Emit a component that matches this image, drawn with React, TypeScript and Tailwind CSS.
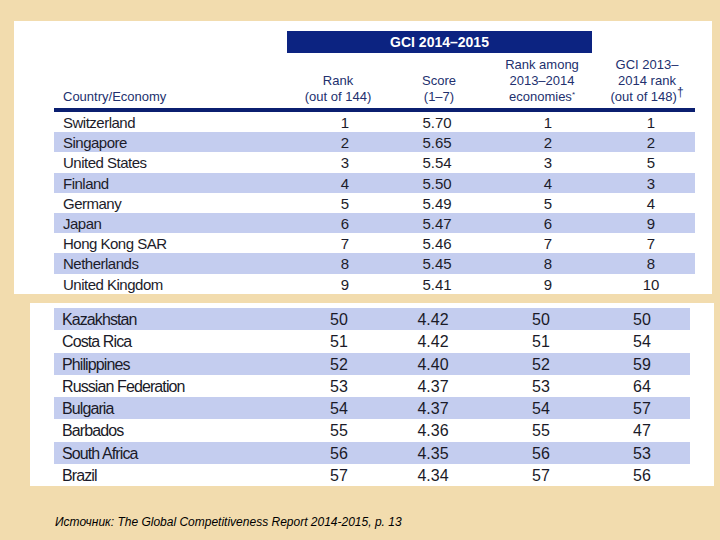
const top: [string, string, string, string, string][] = [
  ["Switzerland", "1", "5.70", "1", "1"],
  ["Singapore", "2", "5.65", "2", "2"],
  ["United States", "3", "5.54", "3", "5"],
  ["Finland", "4", "5.50", "4", "3"],
  ["Germany", "5", "5.49", "5", "4"],
  ["Japan", "6", "5.47", "6", "9"],
  ["Hong Kong SAR", "7", "5.46", "7", "7"],
  ["Netherlands", "8", "5.45", "8", "8"],
  ["United Kingdom", "9", "5.41", "9", "10"],
];

const bottom: [string, string, string, string, string][] = [
  ["Kazakhstan", "50", "4.42", "50", "50"],
  ["Costa Rica", "51", "4.42", "51", "54"],
  ["Philippines", "52", "4.40", "52", "59"],
  ["Russian Federation", "53", "4.37", "53", "64"],
  ["Bulgaria", "54", "4.37", "54", "57"],
  ["Barbados", "55", "4.36", "55", "47"],
  ["South Africa", "56", "4.35", "56", "53"],
  ["Brazil", "57", "4.34", "57", "56"],
];

export default function App() {
  return (
    <div
      className="w-[720px] h-[540px] bg-[#f2dcae] flex flex-col overflow-hidden"
      style={{ fontFamily: '"Liberation Sans", Arial, sans-serif' }}
    >
      {/* Top table */}
      <div className="mt-[21px] ml-[14px] w-[698px] h-[273px] bg-white pl-[40px] flex flex-col">
        <div className="w-[641px] flex flex-col">
          <div className="mt-[10px] ml-[233px] w-[305px] h-[22px] bg-[#0c2381] flex items-center justify-center text-white text-[14px] font-bold">
            GCI 2014–2015
          </div>

          {/* Column headers */}
          <div className="mt-[4px] grid grid-cols-[229px_110px_92px_114px_96px] items-end text-[13px] leading-[16px] text-[#22306e] h-[48px]">
            <div className="pl-[9px]">Country/Economy</div>
            <div className="text-center">
              Rank
              <br />
              (out of 144)
            </div>
            <div className="text-center">
              Score
              <br />
              (1–7)
            </div>
            <div className="text-center">
              Rank among
              <br />
              2013–2014
              <br />
              economies<sup className="text-[8px]">*</sup>
            </div>
            <div className="text-center">
              GCI 2013–
              <br />
              2014 rank
              <br />
              (out of 148)<span className="relative -top-[5px] text-[12px]">†</span>
            </div>
          </div>

          <div className="mt-[3px] h-[4px] bg-[#0b1f70]" />

          {top.map((r, i) => (
            <div
              key={r[0]}
              className={`grid grid-cols-[251px_80px_104px_118px_88px] items-center h-[20.2px] text-[15px] text-[#1c1c2a] ${
                i % 2 === 1 ? "bg-[#c4cdef]" : ""
              }`}
            >
              <div className="pl-[9px] tracking-[-0.5px]">{r[0]}</div>
              <div className="text-center">{r[1]}</div>
              <div className="text-center">{r[2]}</div>
              <div className="text-center">{r[3]}</div>
              <div className="text-center">{r[4]}</div>
            </div>
          ))}
        </div>
      </div>

      {/* Bottom table */}
      <div className="mt-[9px] ml-[30px] w-[684px] bg-white pl-[24px] pt-[5px]">
        <div className="w-[636px]">
          {bottom.map((r, i) => (
            <div
              key={r[0]}
              className={`grid grid-cols-[246px_78px_110px_106px_96px] items-center h-[22.3px] text-[16px] text-[#1a1a28] ${
                i % 2 === 0 ? "bg-[#c4cdef]" : ""
              }`}
            >
              <div className="pl-[8px] tracking-[-0.9px]">{r[0]}</div>
              <div className="text-center">{r[1]}</div>
              <div className="text-center">{r[2]}</div>
              <div className="text-center">{r[3]}</div>
              <div className="text-center">{r[4]}</div>
            </div>
          ))}
        </div>
      </div>

      <p className="mt-[27px] ml-[55px] text-[12px] italic text-black">
        Источник: The Global Competitiveness Report 2014-2015, p. 13
      </p>
    </div>
  );
}
